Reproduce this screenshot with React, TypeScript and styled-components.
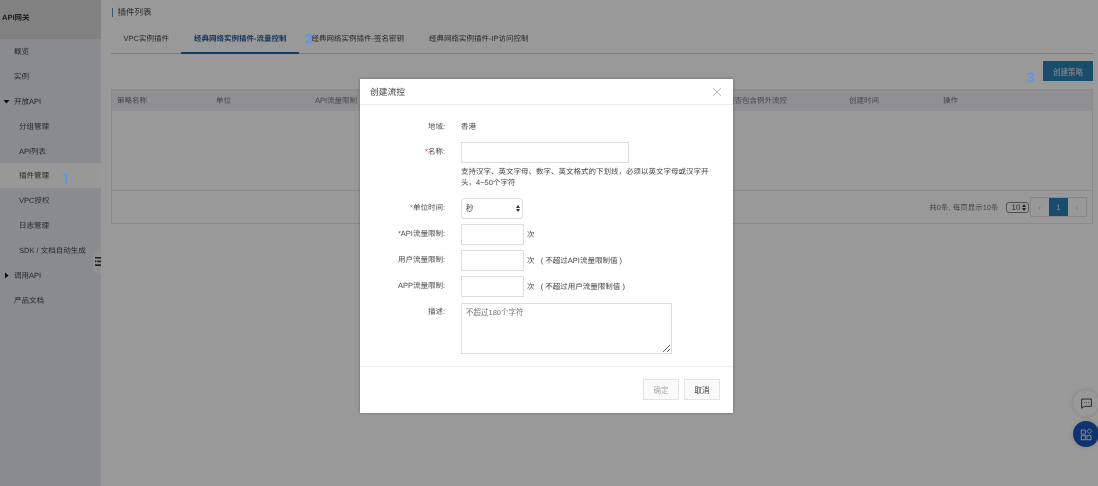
import React from "react";
import styled, { createGlobalStyle } from "styled-components";

const Global = createGlobalStyle`
  html, body { margin: 0; padding: 0; height: 100%; overflow: hidden; background: #fff; }
  body { font-family: "Liberation Sans", "Noto Sans CJK SC", sans-serif; font-size: 7.5px; color: #4a4a4a; text-rendering: geometricPrecision; }
  * { box-sizing: border-box; }
`;

const Page = styled.div`
  position: relative;
  display: flex;
  width: 1098px;
  height: 486px;
  overflow: hidden;
  filter: blur(0.25px);
`;

const Sidebar = styled.aside`
  position: relative;
  flex: 0 0 101px;
  background: #e6e8ef;
`;
const SideHead = styled.div`
  height: 39px;
  padding: 0 0 5px 2px;
  display: flex;
  align-items: center;
  background: #d7d7d7;
  font-weight: bold;
  color: #333;
`;
const SideItem = styled.div<{ $level?: number; $active?: boolean }>`
  position: relative;
  height: 24.9px;
  display: flex;
  align-items: center;
  padding-left: ${(p) => (p.$level ? 19 : 14)}px;
  color: #444;
  background: ${(p) => (p.$active ? "#fdfdfb" : "transparent")};
`;
const Caret = styled.svg`
  position: absolute;
  left: 3px;
  top: 50%;
  width: 7px;
  height: 7px;
  margin-top: -3.5px;
  fill: #111;
`;
const Handle = styled.div`
  position: absolute;
  right: 0;
  top: 247px;
  width: 8px;
  height: 29px;
  background: #f2f2f2;
  clip-path: polygon(100% 0, 100% 100%, 0 82%, 0 18%);
  display: flex;
  align-items: center;
  justify-content: flex-end;
  svg { width: 6px; height: 9px; }
`;

const Main = styled.main`
  flex: 1;
  min-width: 0;
  padding: 0 5px 0 10px;
  background: #fff;
`;
const Heading = styled.h1`
  margin: 0;
  height: 24px;
  display: flex;
  align-items: center;
  gap: 5px;
  font-size: 8.5px;
  font-weight: normal;
  color: #4a4a4a;
  &::before {
    content: "";
    width: 1px;
    height: 9px;
    background: #5f93c0;
    margin-left: 0.5px;
  }
`;
const Tabs = styled.div`
  display: flex;
  height: 30px;
  border-bottom: 1px solid #ccc;
  font-size: 7.5px;
`;
const Tab = styled.div<{ $active?: boolean }>`
  padding: 1px 12.5px 0;
  height: 30px;
  margin-bottom: -1px;
  display: flex;
  align-items: center;
  white-space: nowrap;
  color: ${(p) => (p.$active ? "#2f62a0" : "#444")};
  font-weight: ${(p) => (p.$active ? "bold" : "normal")};
  border-bottom: 2px solid ${(p) => (p.$active ? "#2468aa" : "transparent")};
`;
const Toolbar = styled.div`
  height: 35px;
  display: flex;
  justify-content: flex-end;
  align-items: flex-start;
  padding-top: 7px;
`;
const PrimaryButton = styled.button`
  width: 50px;
  height: 20px;
  border: 0;
  padding: 0;
  font: inherit;
  background: #2a80b4;
  color: #e4e4e4;
`;
const Table = styled.div`
  border: 1px solid #e6e6e6;
  height: 135px;
  display: flex;
  flex-direction: column;
`;
const TableHead = styled.div`
  height: 21px;
  flex: none;
  display: grid;
  grid-template-columns: 99px 99px 140px 140px 132px 122px 94px 1fr;
  padding-left: 5px;
  align-items: center;
  background: #f0f1f4;
  color: #777;
`;
const TableBody = styled.div`
  flex: 1;
  border-bottom: 1px solid #e6e6e6;
`;
const TableFoot = styled.div`
  height: 32px;
  flex: none;
  display: flex;
  justify-content: flex-end;
  align-items: center;
  padding-right: 5px;
  color: #777;
`;
const PageSelect = styled.div`
  margin-left: 7px;
  margin-right: 1px;
  width: 23px;
  height: 11px;
  border: 1px solid #888;
  border-radius: 3px;
  display: flex;
  align-items: center;
  justify-content: space-between;
  padding: 0 2px 0 5px;
  font-size: 8px;
  color: #444;
  svg { width: 4px; height: 7px; }
`;
const Pager = styled.div`
  display: flex;
  height: 20px;
  border: 1px solid #e2e2e2;
`;
const PagerCell = styled.div<{ $active?: boolean }>`
  width: 18.5px;
  display: flex;
  align-items: center;
  justify-content: center;
  background: ${(p) => (p.$active ? "#2a80b4" : "transparent")};
  color: ${(p) => (p.$active ? "#eee" : "#bbb")};
`;

const Mark = styled.span<{ $x: number; $y: number }>`
  position: absolute;
  left: ${(p) => p.$x}px;
  top: ${(p) => p.$y}px;
  z-index: 5;
  color: #4f97f5;
  font-family: Roboto, sans-serif;
  font-weight: 500;
  font-size: 13px;
  line-height: 13px;
`;

const Fab = styled.div<{ $blue?: boolean; $y: number }>`
  position: absolute;
  left: 1073px;
  top: ${(p) => p.$y}px;
  width: 26px;
  height: 26px;
  border-radius: 50%;
  background: ${(p) => (p.$blue ? "#1a56b8" : "#fff")};
  box-shadow: 0 0 4px rgba(0, 0, 0, 0.15);
  display: flex;
  align-items: center;
  justify-content: center;
  svg { width: 13px; height: 13px; }
`;

const Overlay = styled.div`
  position: absolute;
  inset: 0;
  background: rgba(0, 0, 0, 0.4);
`;
const Modal = styled.section`
  position: absolute;
  left: 360px;
  top: 79px;
  width: 373px;
  height: 334px;
  background: #fff;
  box-shadow: 0 0 3px rgba(0, 0, 0, 0.3);
  z-index: 2;
  display: flex;
  flex-direction: column;
`;
const ModalHead = styled.header`
  flex: none;
  height: 26px;
  padding: 0 11px 0 10px;
  display: flex;
  align-items: center;
  justify-content: space-between;
  border-bottom: 1px solid #eee;
  font-size: 8.75px;
  color: #444;
  svg { width: 10px; height: 10px; }
`;
const ModalBody = styled.div`
  flex: 1;
  padding-top: 16px;
`;
const Row = styled.div<{ $mb: number }>`
  display: flex;
  margin-bottom: ${(p) => p.$mb}px;
  min-height: 14px;
`;
const Label = styled.label<{ $h?: number }>`
  flex: 0 0 85px;
  height: ${(p) => p.$h ?? 14}px;
  line-height: ${(p) => (p.$h ?? 14) - 2}px;
  text-align: right;
  color: #4a4a4a;
  white-space: nowrap;
  em { color: #d33; font-style: normal; }
`;
const Value = styled.div`
  margin-left: 16px;
  flex: 1;
  min-width: 0;
`;
const Plain = styled.div`
  line-height: 12px;
  color: #4a4a4a;
`;
const Inline = styled.div`
  display: flex;
  align-items: center;
  height: 21px;
  padding-bottom: 1px;
  color: #444;
  white-space: pre;
`;
const Field = styled.input<{ $w: number }>`
  width: ${(p) => p.$w}px;
  height: 21px;
  border: 1px solid #ddd;
  margin: 0 3px 0 0;
  padding: 0 4px;
  font: inherit;
  outline: none;
  display: block;
  flex: none;
`;
const Hint = styled.p`
  margin: 3px 0 0;
  width: 250px;
  line-height: 11px;
  color: #444;
`;
const SelectWrap = styled.div`
  position: relative;
  width: 62px;
  height: 21px;
  svg { position: absolute; right: 3px; top: 7px; width: 4px; height: 7px; pointer-events: none; }
`;
const Select = styled.select`
  appearance: none;
  width: 100%;
  height: 100%;
  background: #fff;
  border: 1px solid #ddd;
  border-radius: 3px;
  padding: 0 4px;
  font: inherit;
  color: #444;
  outline: none;
`;
const Area = styled.textarea`
  display: block;
  width: 211px;
  height: 51px;
  border: 1px solid #ddd;
  border-radius: 0;
  padding: 4px;
  font: inherit;
  line-height: 10px;
  outline: none;
  margin: 0;
  &::placeholder { color: #777; opacity: 1; }
`;
const ModalFoot = styled.footer`
  flex: none;
  height: 47px;
  border-top: 1px solid #eee;
  display: flex;
  justify-content: flex-end;
  align-items: flex-start;
  gap: 5px;
  padding: 12px 13px 0 0;
`;
const Btn = styled.button<{ $off?: boolean }>`
  width: 36px;
  height: 21px;
  border: 1px solid #e4e4e4;
  padding: 0;
  font: inherit;
  background: #fafafa;
  color: ${(p) => (p.$off ? "#aaa" : "#333")};
`;
const DescLabel = styled(Label)`
  padding-top: 3px;
  height: 17px;
`;

const Updown = () => (
  <svg viewBox="0 0 4 7"><path d="M2 0l2 3H0zM2 7L0 4h4z" fill="#333" /></svg>
);

const side: { t: string; level?: number; caret?: "d" | "r"; active?: boolean }[] = [
  { t: "概览" },
  { t: "实例" },
  { t: "开放API", caret: "d" },
  { t: "分组管理", level: 1 },
  { t: "API列表", level: 1 },
  { t: "插件管理", level: 1, active: true },
  { t: "VPC授权", level: 1 },
  { t: "日志管理", level: 1 },
  { t: "SDK / 文档自动生成", level: 1 },
  { t: "调用API", caret: "r" },
  { t: "产品文档" },
];

export default function App() {
  return (
    <>
      <Global />
      <Page>
        <Sidebar>
          <SideHead>API网关</SideHead>
          {side.map((s) => (
            <SideItem key={s.t} $level={s.level} $active={s.active}>
              {s.caret === "d" && (
                <Caret viewBox="0 0 7 7"><path d="M.5 2h6L3.5 5.5z" /></Caret>
              )}
              {s.caret === "r" && (
                <Caret viewBox="0 0 7 7"><path d="M2 .5v6L5.5 3.5z" /></Caret>
              )}
              {s.t}
            </SideItem>
          ))}
          <Handle>
            <svg viewBox="0 0 6 9">
              <path d="M0 0h6v1.6H0zM0 3.6h1.4v1.6H0zM2.4 3.6H6v1.6H2.4zM0 7.2h6V9H0z" fill="#333a48" />
            </svg>
          </Handle>
        </Sidebar>
        <Main>
          <Heading>插件列表</Heading>
          <Tabs>
            <Tab>VPC实例插件</Tab>
            <Tab $active>经典网络实例插件-流量控制</Tab>
            <Tab>经典网络实例插件-签名密钥</Tab>
            <Tab>经典网络实例插件-IP访问控制</Tab>
          </Tabs>
          <Toolbar>
            <PrimaryButton>创建策略</PrimaryButton>
          </Toolbar>
          <Table>
            <TableHead>
              <span>策略名称</span>
              <span>单位</span>
              <span>API流量限制</span>
              <span>用户流量限制</span>
              <span>APP流量限制</span>
              <span>是否包含例外流控</span>
              <span>创建时间</span>
              <span>操作</span>
            </TableHead>
            <TableBody />
            <TableFoot>
              共0条, 每页显示10条
              <PageSelect>10<Updown /></PageSelect>
              <Pager>
                <PagerCell>‹</PagerCell>
                <PagerCell $active>1</PagerCell>
                <PagerCell>›</PagerCell>
              </Pager>
            </TableFoot>
          </Table>
        </Main>
        <Fab $y={390}>
          <svg viewBox="0 0 16 16" fill="none" stroke="#333" strokeWidth="1.1">
            <path d="M2 2.5h12v9H5l-3 2.5z" />
            <path d="M5 7h1M7.5 7h1M10 7h1" />
          </svg>
        </Fab>
        <Fab $blue $y={421}>
          <svg viewBox="0 0 16 16" fill="none" stroke="#fff" strokeWidth="1">
            <rect x="1.5" y="2.5" width="5" height="5" />
            <rect x="1.5" y="9.5" width="5" height="5" />
            <rect x="8.5" y="9.5" width="5" height="5" />
            <path d="M11.5 1l3 3-3 3-3-3z" />
          </svg>
        </Fab>
        <Overlay />
        <Modal>
          <ModalHead>
            创建流控
            <svg viewBox="0 0 10 10" stroke="#b9b9b9" strokeWidth="1"><path d="M1 1l8 8M9 1L1 9" /></svg>
          </ModalHead>
          <ModalBody>
            <Row $mb={7}>
              <Label>地域:</Label>
              <Value><Plain>香港</Plain></Value>
            </Row>
            <Row $mb={10}>
              <Label $h={21}><em>*</em>名称:</Label>
              <Value>
                <Field $w={168} />
                <Hint>支持汉字、英文字母、数字、英文格式的下划线，必须以英文字母或汉字开头，4~50个字符</Hint>
              </Value>
            </Row>
            <Row $mb={5}>
              <Label $h={21}><em>*</em>单位时间:</Label>
              <Value>
                <SelectWrap>
                  <Select defaultValue="秒"><option>秒</option></Select>
                  <Updown />
                </SelectWrap>
              </Value>
            </Row>
            <Row $mb={5}>
              <Label $h={21}><em>*</em>API流量限制:</Label>
              <Value><Inline><Field $w={63} />次</Inline></Value>
            </Row>
            <Row $mb={5}>
              <Label $h={21}>用户流量限制:</Label>
              <Value><Inline><Field $w={63} />次   ( 不超过API流量限制值 )</Inline></Value>
            </Row>
            <Row $mb={6}>
              <Label $h={21}>APP流量限制:</Label>
              <Value><Inline><Field $w={63} />次   ( 不超过用户流量限制值 )</Inline></Value>
            </Row>
            <Row $mb={0}>
              <DescLabel>描述:</DescLabel>
              <Value><Area placeholder="不超过180个字符" /></Value>
            </Row>
          </ModalBody>
          <ModalFoot>
            <Btn $off>确定</Btn>
            <Btn>取消</Btn>
          </ModalFoot>
        </Modal>
        <Mark $x={62} $y={173}>1</Mark>
        <Mark $x={305} $y={33}>2</Mark>
        <Mark $x={1027} $y={72}>3</Mark>
      </Page>
    </>
  );
}
